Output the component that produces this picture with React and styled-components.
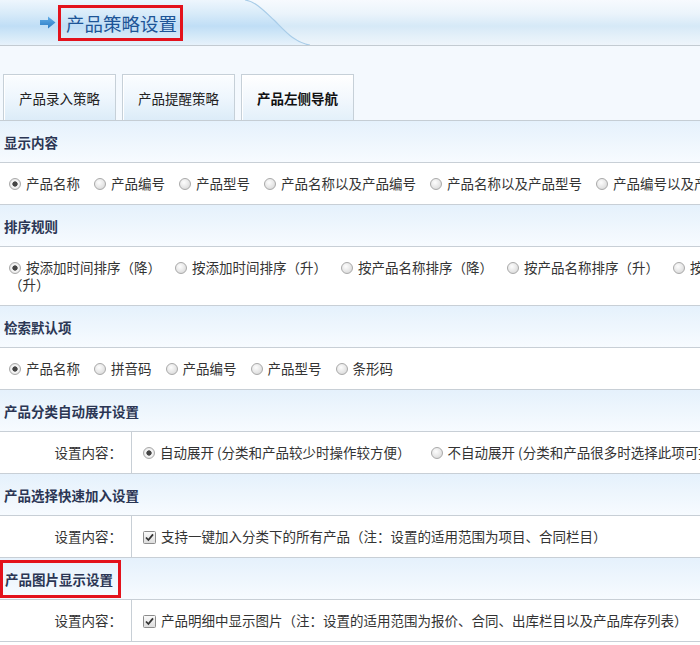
import React from "react";
import styled, { createGlobalStyle } from "styled-components";

const Global = createGlobalStyle`
  html, body { margin: 0; padding: 0; overflow: hidden; background: #fff; }
  body {
    font-family: "Noto Sans CJK SC", "Noto Sans", sans-serif;
    font-size: 13.5px;
    color: #333;
  }
`;

const Page = styled.div`
  width: 100%;
  overflow: hidden;
`;

const HeaderBar = styled.div`
  display: flex;
  height: 45px;
  border-bottom: 1px solid #c3cbd2;
  background: linear-gradient(180deg, #f7fafe 0%, #ebf4fb 30%, #d6e9f7 58%, #e4f0f9 80%, #eef5fb 100%);
`;

const TitleTab = styled.div`
  flex: none;
  width: 245px;
  box-sizing: border-box;
  display: flex;
  align-items: center;
  padding-left: 40px;
  background: linear-gradient(180deg, #eef6fd 0%, #d8ebf9 30%, #c0def6 58%, #d4e9f8 80%, #e7f2fb 100%);
`;

const TitleBox = styled.div`
  display: flex;
  align-items: center;
  box-sizing: border-box;
  height: 36px;
  margin-left: 2px;
  padding: 0 3px 0 5px;
  border: 3px solid #e3121c;
  font-size: 18.5px;
  color: #1d5597;
  white-space: nowrap;
`;

const TabArea = styled.div`
  display: flex;
  gap: 6px;
  padding: 28px 0 0 3px;
  background: #f4f9fe;
  border-bottom: 1px solid #c5cdd4;
`;

const Tab = styled.div`
  width: 113px;
  height: 46px;
  box-sizing: border-box;
  display: flex;
  align-items: center;
  justify-content: center;
  border: 1px solid #c6d0d8;
  border-bottom: none;
  box-shadow: inset 1px 1px 0 #ffffff;
  background: ${(p) =>
    p.$active
      ? "linear-gradient(180deg, #ffffff 0%, #f3f8fd 50%, #e3f0fa 100%)"
      : "linear-gradient(180deg, #fbfdff 0%, #eef6fd 50%, #dcecf8 100%)"};
  color: ${(p) => (p.$active ? "#111" : "#222")};
  font-weight: ${(p) => (p.$active ? 700 : 400)};
`;

const Content = styled.div`
  width: 975px;
`;

const SectionTitle = styled.div`
  display: flex;
  align-items: center;
  height: 41px;
  padding-left: 4px;
  border-bottom: 1px solid #c8cfd6;
  background: linear-gradient(180deg, #e5f1fc 0%, #eef6fd 50%, #f7fbff 100%);
  font-weight: 700;
  color: #2b3654;
`;

const MarkedTitle = styled.span`
  display: flex;
  align-items: center;
  box-sizing: border-box;
  height: 38px;
  margin-left: -4px;
  padding: 0 5px 0 2px;
  border: 3px solid #e3121c;
`;

const OptionRow = styled.div`
  padding: 12px 10px 12px 9px;
  line-height: 17px;
  background: #fff;
  border-bottom: 1px solid #c8cfd6;
`;

const Option = styled.label`
  margin-right: ${(p) => (p.$space != null ? p.$space : 14)}px;
`;

const Radio = styled.span`
  display: inline-block;
  width: 12px;
  height: 12px;
  box-sizing: border-box;
  border-radius: 50%;
  border: 1px solid #a9a9a9;
  margin-right: 5px;
  vertical-align: -1px;
  background: ${(p) =>
    p.$checked
      ? "radial-gradient(circle, #454545 0, #454545 2.3px, #fafafa 3px, #e6e6e6 5px)"
      : "radial-gradient(circle at 40% 35%, #fdfdfd 0, #e4e4e4 60%, #cfcfcf 100%)"};
`;

const FieldRow = styled.div`
  display: flex;
  background: #fff;
  border-bottom: 1px solid #c8cfd6;
  line-height: 17px;
`;

const FieldLabel = styled.div`
  flex: none;
  width: 132px;
  box-sizing: border-box;
  padding: 12px 9px 12px 0;
  text-align: right;
  border-right: 1px solid #c8cfd6;
`;

const FieldValue = styled.div`
  flex: 1;
  padding: 12px 0 12px 11px;
  white-space: nowrap;
`;

const CheckSvg = styled.svg`
  margin-right: 5px;
  vertical-align: -2px;
`;

const Arrow = () => (
  <svg width="16" height="13" viewBox="0 0 16 13">
    <defs>
      <linearGradient id="arrowGrad" x1="0" y1="0" x2="0" y2="1">
        <stop offset="0" stopColor="#63aee8" />
        <stop offset="1" stopColor="#2b7bc4" />
      </linearGradient>
    </defs>
    <path d="M0 4 H8 V0.5 L15.5 6.5 L8 12.5 V9 H0 Z" fill="url(#arrowGrad)" />
  </svg>
);

const Curve = () => (
  <svg width="65" height="45" viewBox="0 0 65 45" style={{ flex: "none", display: "block" }}>
    <defs>
      <linearGradient id="tabGrad" x1="0" y1="0" x2="0" y2="45" gradientUnits="userSpaceOnUse">
        <stop offset="0" stopColor="#eef6fd" />
        <stop offset="0.3" stopColor="#d8ebf9" />
        <stop offset="0.58" stopColor="#c0def6" />
        <stop offset="0.8" stopColor="#d4e9f8" />
        <stop offset="1" stopColor="#e7f2fb" />
      </linearGradient>
    </defs>
    <path d="M0 0 C12 2 20 12 30 21 C40 31 50 43 65 45 L0 45 Z" fill="url(#tabGrad)" />
    <path d="M0 0 C12 2 20 12 30 21 C40 31 50 43 65 45" fill="none" stroke="#a8cce8" strokeWidth="1.2" />
  </svg>
);

const Check = () => (
  <CheckSvg width="13" height="13" viewBox="0 0 13 13">
    <defs>
      <linearGradient id="cbGrad" x1="0" y1="0" x2="0" y2="1">
        <stop offset="0" stopColor="#fbfbfb" />
        <stop offset="1" stopColor="#dcdcdc" />
      </linearGradient>
    </defs>
    <rect x="0.5" y="0.5" width="12" height="12" rx="1" fill="url(#cbGrad)" stroke="#8c8c8c" />
    <path d="M3 6.5 L5.4 9 L10 3.4" fill="none" stroke="#333" strokeWidth="1.8" />
  </CheckSvg>
);

const RadioOption = ({ checked, children, space }) => (
  <Option $space={space}>
    <Radio $checked={checked} />
    {children}
  </Option>
);

const tabs = ["产品录入策略", "产品提醒策略", "产品左侧导航"];

const displayOpts = ["产品名称", "产品编号", "产品型号", "产品名称以及产品编号", "产品名称以及产品型号", "产品编号以及产品型号"];
const sortOpts = [
  "按添加时间排序（降）",
  "按添加时间排序（升）",
  "按产品名称排序（降）",
  "按产品名称排序（升）",
  "按产品编号排序（降）",
  "按产品编号排序（升）",
];
const searchOpts = ["产品名称", "拼音码", "产品编号", "产品型号", "条形码"];

export default function App() {
  return (
    <Page>
      <Global />
      <HeaderBar>
        <TitleTab>
          <Arrow />
          <TitleBox>产品策略设置</TitleBox>
        </TitleTab>
        <Curve />
      </HeaderBar>
      <TabArea>
        {tabs.map((t, i) => (
          <Tab key={t} $active={i === 2}>
            {t}
          </Tab>
        ))}
      </TabArea>
      <Content>
        <SectionTitle>显示内容</SectionTitle>
        <OptionRow>
          {displayOpts.map((o, i) => (
            <RadioOption key={o} checked={i === 0}>
              {o}
            </RadioOption>
          ))}
        </OptionRow>

        <SectionTitle>排序规则</SectionTitle>
        <OptionRow>
          {sortOpts.map((o, i) => (
            <RadioOption key={o} checked={i === 0}>
              {o}
            </RadioOption>
          ))}
        </OptionRow>

        <SectionTitle>检索默认项</SectionTitle>
        <OptionRow>
          {searchOpts.map((o, i) => (
            <RadioOption key={o} checked={i === 0}>
              {o}
            </RadioOption>
          ))}
        </OptionRow>

        <SectionTitle>产品分类自动展开设置</SectionTitle>
        <FieldRow>
          <FieldLabel>设置内容：</FieldLabel>
          <FieldValue>
            <RadioOption checked space={20}>
              自动展开 (分类和产品较少时操作较方便）
            </RadioOption>
            <RadioOption>不自动展开 (分类和产品很多时选择此项可提高速度）</RadioOption>
          </FieldValue>
        </FieldRow>

        <SectionTitle>产品选择快速加入设置</SectionTitle>
        <FieldRow>
          <FieldLabel>设置内容：</FieldLabel>
          <FieldValue>
            <Check />
            支持一键加入分类下的所有产品（注：设置的适用范围为项目、合同栏目）
          </FieldValue>
        </FieldRow>

        <SectionTitle>
          <MarkedTitle>产品图片显示设置</MarkedTitle>
        </SectionTitle>
        <FieldRow>
          <FieldLabel>设置内容：</FieldLabel>
          <FieldValue>
            <Check />
            产品明细中显示图片（注：设置的适用范围为报价、合同、出库栏目以及产品库存列表）
          </FieldValue>
        </FieldRow>
      </Content>
    </Page>
  );
}
